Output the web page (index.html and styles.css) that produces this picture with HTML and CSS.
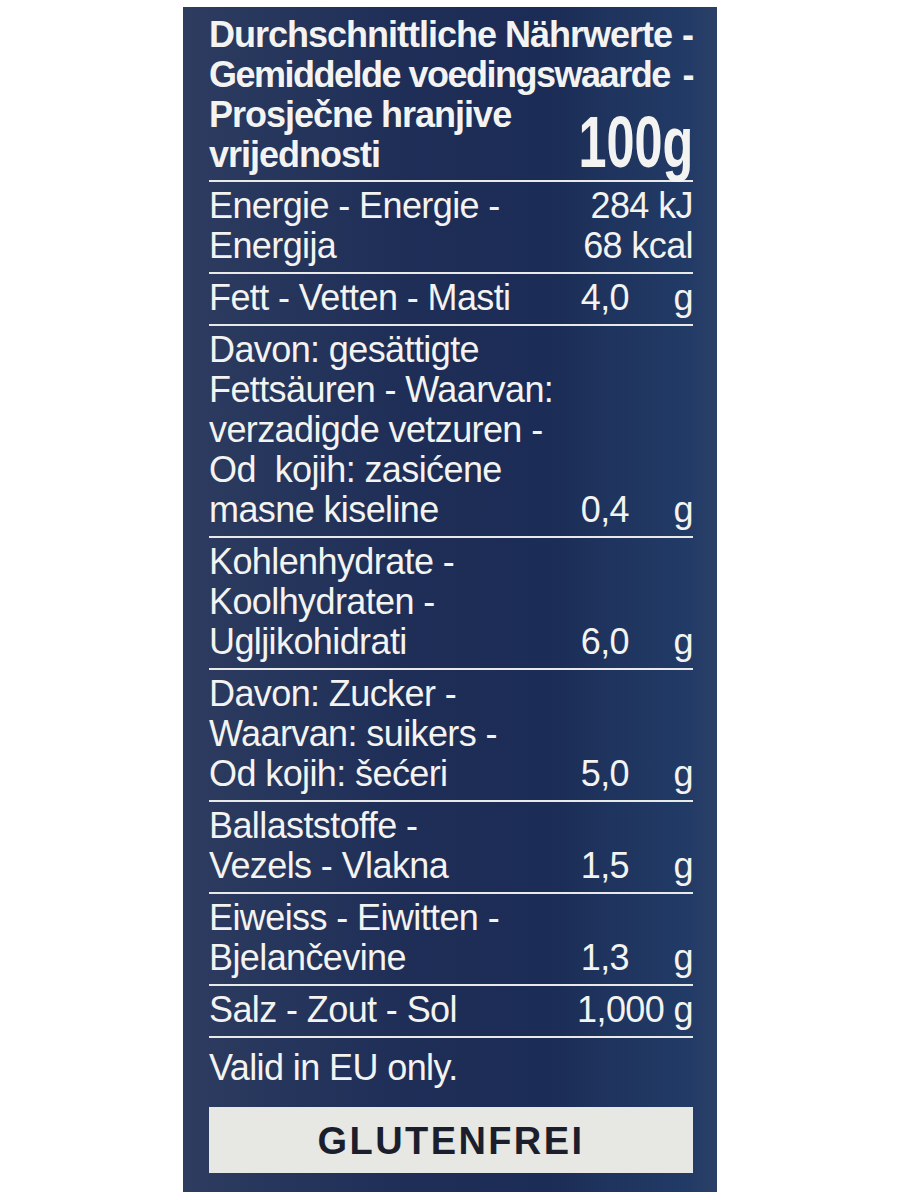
FILE: index.html
```html
<!DOCTYPE html>
<html lang="de">
<head>
<meta charset="utf-8">
<title>Nährwerte</title>
<link rel="stylesheet" href="styles.css">
</head>
<body>
<div class="panel">
  <div class="head">
    <div class="hline"><span>Durchschnittliche Nährwerte</span><span>-</span></div>
    <div class="hline tight"><span>Gemiddelde voedingswaarde</span><span>-</span></div>
    <div class="hlast">
      <div>Prosječne hranjive<br>vrijednosti</div>
      <div class="per"><span class="per-in">100g</span></div>
    </div>
  </div>

  <div class="row">
    <div class="lbl">Energie - Energie -<br>Energija</div>
    <div class="val txt">284 kJ<br>68 kcal</div>
  </div>

  <div class="row">
    <div class="lbl">Fett - Vetten - Masti</div>
    <div class="val"><span class="num">4,0</span><span class="unit">g</span></div>
  </div>

  <div class="row">
    <div class="lbl">Davon: gesättigte<br>Fettsäuren - Waarvan:<br>verzadigde vetzuren -<br>Od&nbsp; kojih: zasićene<br>masne kiseline</div>
    <div class="val"><span class="num">0,4</span><span class="unit">g</span></div>
  </div>

  <div class="row">
    <div class="lbl">Kohlenhydrate -<br>Koolhydraten -<br>Ugljikohidrati</div>
    <div class="val"><span class="num">6,0</span><span class="unit">g</span></div>
  </div>

  <div class="row">
    <div class="lbl">Davon: Zucker -<br>Waarvan: suikers -<br>Od kojih: šećeri</div>
    <div class="val"><span class="num">5,0</span><span class="unit">g</span></div>
  </div>

  <div class="row">
    <div class="lbl">Ballaststoffe -<br>Vezels - Vlakna</div>
    <div class="val"><span class="num">1,5</span><span class="unit">g</span></div>
  </div>

  <div class="row">
    <div class="lbl">Eiweiss - Eiwitten -<br>Bjelančevine</div>
    <div class="val"><span class="num">1,3</span><span class="unit">g</span></div>
  </div>

  <div class="row">
    <div class="lbl">Salz - Zout - Sol</div>
    <div class="val txt">1,000 g</div>
  </div>

  <div class="row note">Valid in EU only.</div>

  <div class="badge">GLUTENFREI</div>
</div>
</body>
</html>
```

FILE: styles.css
```css
html, body {
  margin: 0;
  padding: 0;
  background: #ffffff;
}

body {
  font-family: "Liberation Sans", Arial, sans-serif;
}

.panel {
  width: 534px;
  margin: 7px auto 0;
  box-sizing: border-box;
  padding: 8px 24px 19px 26px;
  background: linear-gradient(90deg, #2e3c60 0%, #27365c 16%, #1f2e57 42%, #1b2c56 68%, #1f355f 82%, #213a66 94%, #2a4068 100%);
  color: #f3f3f1;
  font-size: 36px;
  line-height: 40px;
  letter-spacing: -0.6px;
  white-space: nowrap;
}

.head {
  font-weight: bold;
  letter-spacing: -1px;
  padding-bottom: 5px;
}

.hline {
  display: flex;
  justify-content: space-between;
}

.hline.tight {
  letter-spacing: -1.5px;
}

.hlast {
  display: flex;
  justify-content: space-between;
  align-items: flex-end;
}

.per {
  font-size: 73px;
  line-height: 66px;
  letter-spacing: 0;
}

.per-in {
  display: inline-block;
  transform: scaleX(0.69);
  transform-origin: right bottom;
}

.row {
  display: flex;
  justify-content: space-between;
  align-items: flex-end;
  border-top: 2px solid #e9e9e7;
  padding: 4px 0 6px;
}

.val {
  display: flex;
  align-items: flex-end;
}

.val.txt {
  display: block;
  text-align: right;
}

.num {
  text-align: right;
}

.unit {
  width: 64px;
  text-align: right;
}

.note {
  padding: 10px 0 0;
}

.badge {
  margin-top: 19px;
  height: 66px;
  box-sizing: border-box;
  padding-top: 3px;
  line-height: 63px;
  background: #e7e7e3;
  color: #1b1f2d;
  text-align: center;
  font-weight: bold;
  font-size: 38px;
  letter-spacing: 2.4px;
}
```
